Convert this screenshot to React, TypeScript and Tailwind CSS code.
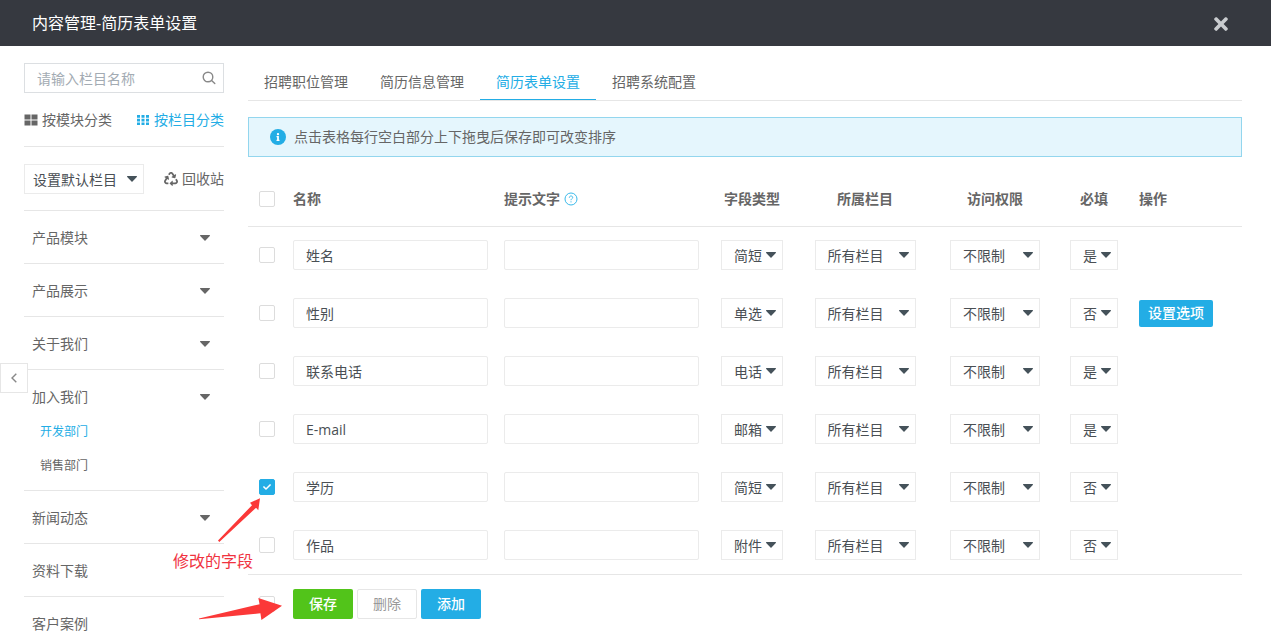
import { useState } from "react";
import { FaTimes, FaCheck, FaRecycle, FaInfo } from "react-icons/fa";

const TABS = ["招聘职位管理", "简历信息管理", "简历表单设置", "招聘系统配置"];

const MENU: { name: string; caret: boolean; children?: string[] }[] = [
  { name: "产品模块", caret: true },
  { name: "产品展示", caret: true },
  { name: "关于我们", caret: true },
  { name: "加入我们", caret: true, children: ["开发部门", "销售部门"] },
  { name: "新闻动态", caret: true },
  { name: "资料下载", caret: false },
  { name: "客户案例", caret: false },
];

const FIELDS = [
  { name: "姓名", type: "简短", required: "是" },
  { name: "性别", type: "单选", required: "否", options: true },
  { name: "联系电话", type: "电话", required: "是" },
  { name: "E-mail", type: "邮箱", required: "是" },
  { name: "学历", type: "简短", required: "否", checked: true },
  { name: "作品", type: "附件", required: "否" },
];

function Caret({ className = "" }: { className?: string }) {
  return (
    <svg viewBox="0 0 10 6" className={`h-1.5 w-2.5 ${className}`} fill="currentColor" aria-hidden="true">
      <path d="M.6 0h8.8c.6 0 .8.6.4 1L5.5 5.6a.7.7 0 0 1-1 0L.2 1C-.2.6 0 0 .6 0Z" />
    </svg>
  );
}

function Checkbox({ label, defaultChecked = false }: { label: string; defaultChecked?: boolean }) {
  return (
    <span className="relative block size-4">
      <input
        type="checkbox"
        aria-label={label}
        defaultChecked={defaultChecked}
        className="peer block size-4 appearance-none rounded-xs border border-[#dcdcdc] bg-white checked:border-[#23ade5] checked:bg-[#23ade5]"
      />
      <FaCheck className="pointer-events-none absolute inset-1 hidden size-2 text-white peer-checked:block" aria-hidden="true" />
    </span>
  );
}

function Select({
  label,
  values,
  value,
  width,
  padding = "pl-3",
}: {
  label: string;
  values: string[];
  value: string;
  width: string;
  padding?: string;
}) {
  return (
    <span className={`relative inline-block align-middle ${width}`}>
      <select
        aria-label={label}
        defaultValue={value}
        className={`block h-[30px] w-full appearance-none border border-[#ebebeb] bg-white pt-0.5 text-sm text-[#4a4f54] ${padding}`}
      >
        {values.map((v) => (
          <option key={v}>{v}</option>
        ))}
      </select>
      <Caret className="pointer-events-none absolute top-3 right-[7px] text-[#45525a]" />
    </span>
  );
}

function Sidebar() {
  return (
    <aside className="w-[224px] shrink-0 overflow-y-auto pt-[17px] pl-6 [scrollbar-width:none]">
      <div className="relative">
        <input
          type="search"
          aria-label="请输入栏目名称"
          placeholder="请输入栏目名称"
          className="block h-[30px] w-full border border-[#dcdfe2] pr-8 pl-3 text-sm placeholder:text-[#a3abb3]"
        />
        <button type="button" aria-label="搜索" className="absolute top-2 right-2 text-[#888]">
          <svg viewBox="0 0 14 14" className="size-3.5" fill="none" stroke="currentColor" strokeWidth="1.4" aria-hidden="true">
            <circle cx="6" cy="6" r="4.800" />
            <path d="m9.600 9.600 3.200 3" strokeLinecap="round" />
          </svg>
        </button>
      </div>

      <div className="flex h-[54px] items-center justify-between border-b border-[#e6e6e6]">
        <button type="button" className="flex items-center gap-1 whitespace-nowrap">
          <svg viewBox="0 0 14 14" className="size-3.5" fill="currentColor" aria-hidden="true">
            <path d="M.5 1.500h6v5h-6zM7.500 1.500h6v5h-6zM.5 7.500h6v5h-6zM7.500 7.500h6v5h-6z" />
          </svg>
          按模块分类
        </button>
        <button type="button" className="flex items-center gap-1 whitespace-nowrap text-[#23ade5]">
          <svg viewBox="0 0 14 14" className="size-3.5" fill="currentColor" aria-hidden="true">
            <path d="M1 2h3v2.700H1zM5.500 2h3v2.700h-3zM10 2h3v2.700h-3zM1 5.700h3v2.700H1zM5.500 5.700h3v2.700h-3zM10 5.700h3v2.700h-3zM1 9.400h3v2.700H1zM5.500 9.400h3v2.700h-3zM10 9.400h3v2.700h-3z" />
          </svg>
          按栏目分类
        </button>
      </div>

      <div className="flex h-16 items-center justify-between border-b border-[#e6e6e6]">
        <Select label="默认栏目" values={["设置默认栏目"]} value="设置默认栏目" width="w-[120px]" padding="pl-2" />
        <button type="button" className="flex items-center gap-1 whitespace-nowrap">
          <FaRecycle className="size-3.5" />
          回收站
        </button>
      </div>

      <nav>
        {MENU.map((m) => (
          <div key={m.name} className="border-b border-[#e6e6e6]">
            <button
              type="button"
              className={`flex w-full items-center justify-between pt-[17px] pr-3.5 pl-2 text-left leading-5 ${m.children ? "pb-2" : "pb-[15px]"}`}
            >
              {m.name}
              {m.caret && <Caret />}
            </button>
            {m.children && (
              <ul className="pb-[7px] pl-4 text-xs leading-[34px]">
                {m.children.map((c, i) => (
                  <li key={c}>
                    <a href="#" className={i === 0 ? "text-[#23ade5]" : ""}>
                      {c}
                    </a>
                  </li>
                ))}
              </ul>
            )}
          </div>
        ))}
      </nav>
    </aside>
  );
}

function FieldTable() {
  return (
    <table className="mt-4 w-full min-w-[860px] table-fixed text-left">
      <colgroup>
        <col className="w-[45px]" />
        <col />
        <col />
        <col className="w-[74px]" />
        <col className="w-[152px]" />
        <col className="w-[108px]" />
        <col className="w-[90px]" />
        <col className="w-[103px]" />
      </colgroup>
      <thead>
        <tr className="h-[53px] border-b border-[#e6e6e6]">
          <th className="pl-[11px]">
            <Checkbox label="全选" />
          </th>
          <th>名称</th>
          <th>
            <span className="flex items-center gap-1">
              提示文字
              <svg viewBox="0 0 14 14" className="size-3.5 text-[#39b9ea]" fill="none" stroke="currentColor" aria-hidden="true">
                <circle cx="7" cy="7" r="6" />
                <path d="M5.300 5.700c0-2.300 3.400-2.200 3.400-.2C8.700 6.700 7 6.700 7 8.200M7 9.300v1.100" />
              </svg>
            </span>
          </th>
          <th className="text-center">字段类型</th>
          <th className="text-center">所属栏目</th>
          <th className="text-center">访问权限</th>
          <th className="text-center">必填</th>
          <th>操作</th>
        </tr>
      </thead>
      <tbody className="border-b border-[#e6e6e6]">
        {FIELDS.map((f) => (
          <tr key={f.name} className="h-[58px]">
            <td className="pl-[11px]">
              <Checkbox label={`选择${f.name}`} defaultChecked={f.checked} />
            </td>
            <td className="pr-4">
              <input
                aria-label="名称"
                defaultValue={f.name}
                className="block h-[30px] w-full rounded-xs border border-[#ebebeb] px-3 text-sm text-[#4a4f54]"
              />
            </td>
            <td className="pr-4">
              <input
                aria-label="提示文字"
                className="block h-[30px] w-full rounded-xs border border-[#ebebeb] px-3 text-sm text-[#4a4f54]"
              />
            </td>
            <td className="text-center">
              <Select label="字段类型" values={["简短", "单选", "电话", "邮箱", "附件"]} value={f.type} width="w-[62px]" />
            </td>
            <td className="text-center">
              <Select label="所属栏目" values={["所有栏目"]} value="所有栏目" width="w-[101px]" />
            </td>
            <td className="text-center">
              <Select label="访问权限" values={["不限制"]} value="不限制" width="w-[90px]" />
            </td>
            <td className="text-center">
              <Select label="必填" values={["是", "否"]} value={f.required} width="w-12" />
            </td>
            <td>
              {f.options && (
                <button type="button" className="block h-[27px] w-[74px] rounded-xs bg-[#23ade5] font-medium text-white">
                  设置选项
                </button>
              )}
            </td>
          </tr>
        ))}
      </tbody>
    </table>
  );
}

export default function App() {
  const [tab, setTab] = useState(2);
  return (
    <div className="relative flex h-screen flex-col overflow-hidden bg-white font-['Open_Sans','Noto_Sans_CJK_SC',sans-serif] text-sm text-[#666]">
      <header className="flex h-[46px] shrink-0 items-center justify-between bg-[#363940] pr-10 pl-8">
        <h1 className="text-base text-white">内容管理-简历表单设置</h1>
        <button type="button" aria-label="关闭" className="pt-0.5 text-[#c9cccf]">
          <FaTimes className="size-5" />
        </button>
      </header>

      <div className="flex min-h-0 grow">
        <Sidebar />
        <main className="min-w-0 grow overflow-auto pt-[17px] pr-[29px] pl-6 [scrollbar-width:none]">
          <div role="tablist" className="flex h-[38px] border-b border-[#e6e6e6]">
            {TABS.map((t, i) => (
              <button
                key={t}
                type="button"
                role="tab"
                aria-selected={i === tab}
                onClick={() => setTab(i)}
                className={`border-b px-4 pt-0.5 whitespace-nowrap ${i === tab ? "border-b-[#23ade5] text-[#23ade5]" : "border-b-transparent"}`}
              >
                {t}
              </button>
            ))}
          </div>

          <p className="mt-4 flex h-10 items-center gap-2 border border-[#93d6ee] bg-[#e5f6fd] pl-[21px]">
            <span className="flex size-4 items-center justify-center rounded-full bg-[#23ade5] text-white">
              <FaInfo className="size-2" aria-hidden="true" />
            </span>
            点击表格每行空白部分上下拖曳后保存即可改变排序
          </p>

          <FieldTable />

          <div className="flex items-center gap-1 pt-3.5">
            <div className="w-[41px] pl-[11px]">
              <Checkbox label="全选" />
            </div>
            <button type="button" className="h-[30px] w-[60px] rounded-xs bg-[#52c41a] font-medium text-white">
              保存
            </button>
            <button type="button" className="h-[30px] w-[60px] rounded-xs border border-[#e6e6e6] text-[#999]">
              删除
            </button>
            <button type="button" className="h-[30px] w-[60px] rounded-xs bg-[#23ade5] font-medium text-white">
              添加
            </button>
          </div>
        </main>
      </div>

      <button
        type="button"
        aria-label="收起侧栏"
        className="absolute top-[363px] left-0 flex h-[30px] w-7 items-center justify-center border border-[#e6e6e6] bg-white text-[#888]"
      >
        <svg viewBox="0 0 6 10" className="h-2.5 w-1.5" fill="none" stroke="currentColor" strokeWidth="1.4" aria-hidden="true">
          <path d="M5.300.7 1 5l4.300 4.300" />
        </svg>
      </button>

      <svg
        viewBox="0 0 90 130"
        className="pointer-events-none absolute top-[495px] left-[195px] h-[130px] w-[90px]"
        fill="#fb3838"
        aria-hidden="true"
      >
        <path d="M65 3.300 55 7.700l2 2.500L23 45.600l1.300 1.300L61 12.800l2.300 2.400Z" />
        <path d="M87 110.800 63.300 103l1.400 6.200L4 123.400v.8l61.400-5.900 1 6.700Z" />
      </svg>
      <span className="absolute top-[549px] left-[173px] text-base whitespace-nowrap text-[#f0333f]">修改的字段</span>
    </div>
  );
}
